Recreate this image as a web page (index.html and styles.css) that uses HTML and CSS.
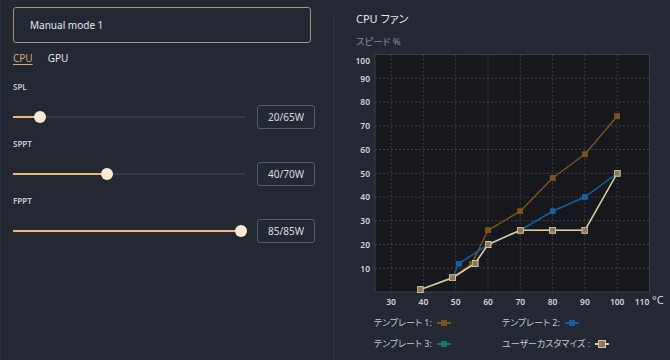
FILE: index.html
```html
<!DOCTYPE html>
<html>
  <head>
    <link rel="stylesheet" href="styles.css">
  </head>
  <body>
    <div class="left">
      <div class="mode-box">Manual mode 1</div>

      <div class="tabs">
        <span class="tab active">CPU</span>
        <span class="tab">GPU</span>
      </div>

      <div class="group">
        <div class="label">SPL</div>
        <div class="row">
          <div class="track">
            <div class="fill" style="width: 27px"></div>
            <div class="thumb" style="left: 27px"></div>
          </div>
          <div class="value">20/65W</div>
        </div>
      </div>

      <div class="group">
        <div class="label">SPPT</div>
        <div class="row">
          <div class="track">
            <div class="fill" style="width: 94px"></div>
            <div class="thumb" style="left: 94px"></div>
          </div>
          <div class="value">40/70W</div>
        </div>
      </div>

      <div class="group">
        <div class="label">FPPT</div>
        <div class="row">
          <div class="track">
            <div class="fill" style="width: 228px"></div>
            <div class="thumb" style="left: 228px"></div>
          </div>
          <div class="value">85/85W</div>
        </div>
      </div>
    </div>

    <div class="divider"></div>

    <div class="right">
      <div class="head">
        <div class="title">CPU ファン</div>
        <div class="subtitle">スピード %</div>
      </div>

      <svg class="chart" width="335" height="260" viewBox="0 0 335 260">
        <defs>
          <marker id="m-brown" viewBox="0 0 6 6" refX="3" refY="3" markerWidth="6" markerHeight="6" markerUnits="userSpaceOnUse">
            <rect width="6" height="6" fill="#7a5419" />
          </marker>
          <marker id="m-blue" viewBox="0 0 6 6" refX="3" refY="3" markerWidth="6" markerHeight="6" markerUnits="userSpaceOnUse">
            <rect width="6" height="6" fill="#14609f" />
          </marker>
          <marker id="m-teal" viewBox="0 0 6 6" refX="3" refY="3" markerWidth="6" markerHeight="6" markerUnits="userSpaceOnUse">
            <rect width="6" height="6" fill="#167a6a" />
          </marker>
          <marker id="m-custom" viewBox="0 0 7 7" refX="3.5" refY="3.5" markerWidth="7" markerHeight="7" markerUnits="userSpaceOnUse">
            <rect x="0.5" y="0.5" width="6" height="6" fill="#8a7862" stroke="#dcc297" stroke-width="1" />
          </marker>
        </defs>

        <!-- plot area -->
        <rect class="plot" x="41" y="4.5" width="274.5" height="237.5" />

        <g class="grid">
          <line x1="57.1" y1="4.5" x2="57.1" y2="242" />
          <line x1="89.4" y1="4.5" x2="89.4" y2="242" />
          <line x1="121.7" y1="4.5" x2="121.7" y2="242" />
          <line x1="154" y1="4.5" x2="154" y2="242" />
          <line x1="186.3" y1="4.5" x2="186.3" y2="242" />
          <line x1="218.6" y1="4.5" x2="218.6" y2="242" />
          <line x1="250.9" y1="4.5" x2="250.9" y2="242" />
          <line x1="283.2" y1="4.5" x2="283.2" y2="242" />

          <line x1="41" y1="28.25" x2="315.5" y2="28.25" />
          <line x1="41" y1="52" x2="315.5" y2="52" />
          <line x1="41" y1="75.75" x2="315.5" y2="75.75" />
          <line x1="41" y1="99.5" x2="315.5" y2="99.5" />
          <line x1="41" y1="123.25" x2="315.5" y2="123.25" />
          <line x1="41" y1="147" x2="315.5" y2="147" />
          <line x1="41" y1="170.75" x2="315.5" y2="170.75" />
          <line x1="41" y1="194.5" x2="315.5" y2="194.5" />
          <line x1="41" y1="218.25" x2="315.5" y2="218.25" />
        </g>

        <g class="axis-y">
          <text x="36" y="13.5">100</text>
          <text x="36" y="31.5">90</text>
          <text x="36" y="55">80</text>
          <text x="36" y="79">70</text>
          <text x="36" y="102.5">60</text>
          <text x="36" y="126.5">50</text>
          <text x="36" y="150">40</text>
          <text x="36" y="174">30</text>
          <text x="36" y="197.5">20</text>
          <text x="36" y="221.5">10</text>
        </g>

        <g class="axis-x">
          <text x="57.1" y="254.5">30</text>
          <text x="89.4" y="254.5">40</text>
          <text x="121.7" y="254.5">50</text>
          <text x="154" y="254.5">60</text>
          <text x="186.3" y="254.5">70</text>
          <text x="218.6" y="254.5">80</text>
          <text x="250.9" y="254.5">90</text>
          <text x="283.2" y="254.5">100</text>
          <text x="308" y="254.5">110</text>
        </g>
        <text class="unit" x="318" y="254">°C</text>

        <!-- series -->
        <polyline class="line" stroke="#167a6a" marker-start="url(#m-teal)" marker-mid="url(#m-teal)" marker-end="url(#m-teal)"
          points="86.2,239.6 118.5,227.75 141.1,213.5 154,194.5 186.3,180.25 218.6,180.25 250.9,180.25 283.2,123.25" />
        <polyline class="line" stroke="#7a5419" marker-start="url(#m-brown)" marker-mid="url(#m-brown)" marker-end="url(#m-brown)"
          points="86.2,239.6 118.5,227.75 137.9,213.5 154,180.25 186.3,161.25 218.6,128 250.9,104.25 283.2,66.25" />
        <polyline class="line" stroke="#14609f" marker-start="url(#m-blue)" marker-mid="url(#m-blue)" marker-end="url(#m-blue)"
          points="86.2,239.6 118.5,227.75 125,213.5 154,194.5 186.3,180.25 218.6,161.25 250.9,147 283.2,123.25" />
        <polyline class="line" stroke="#e8c994" marker-start="url(#m-custom)" marker-mid="url(#m-custom)" marker-end="url(#m-custom)"
          points="86.2,239.6 118.5,227.75 141.1,213.5 154,194.5 186.3,180.25 218.6,180.25 250.9,180.25 283.2,123.25" />
      </svg>

      <div class="legend">
        <div class="legend-item">テンプレート 1: <span class="swatch brown"></span></div>
        <div class="legend-item">テンプレート 2: <span class="swatch blue"></span></div>
        <div class="legend-item">テンプレート 3: <span class="swatch teal"></span></div>
        <div class="legend-item">ユーザーカスタマイズ : <span class="swatch custom"></span></div>
      </div>
    </div>
  </body>
</html>
```

FILE: styles.css
```css
body {
  margin: 0;
  width: 670px;
  height: 360px;
  overflow: hidden;
  display: flex;
  background-color: #232833;
  color: #e6e7ea;
  font-family: "Noto Sans", "Noto Sans CJK JP", sans-serif;
  font-feature-settings: "palt";
}

.left {
  width: 333px;
  border-left: 1px solid #2b303b;
  padding-left: 12px;
  box-sizing: border-box;
}

.divider {
  width: 1px;
  margin-top: 13px;
  background-color: #2f3440;
}

.right {
  flex: 1;
}

/* left side */

.mode-box {
  margin-top: 7px;
  width: 298px;
  height: 36px;
  box-sizing: border-box;
  border: 1px solid #a8937a;
  border-radius: 3px;
  padding-left: 16px;
  display: flex;
  align-items: center;
  font-size: 10px;
}

.tabs {
  margin-top: 7px;
  display: flex;
  gap: 15px;
  font-size: 10px;
  line-height: 16px;
}

.tab.active {
  color: #d5a874;
  text-decoration: underline;
  text-underline-offset: 2px;
}

.group {
  margin-top: 7px;
}

.tabs + .group {
  margin-top: 13px;
}

.label {
  font-size: 8px;
  font-weight: 600;
  line-height: 16px;
  color: #c9ccd2;
}

.row {
  margin-top: 10px;
  display: flex;
  align-items: center;
}

.track {
  position: relative;
  width: 232px;
  height: 2px;
  background-color: #343944;
}

.fill {
  height: 100%;
  background-color: #eeb574;
}

.thumb {
  position: absolute;
  top: -5px;
  width: 12px;
  height: 12px;
  margin-left: -6px;
  border-radius: 50%;
  background-color: #f9ead6;
}

.value {
  margin-left: 12px;
  width: 58px;
  height: 24px;
  box-sizing: border-box;
  border: 1px solid #565b66;
  border-radius: 3px;
  display: flex;
  align-items: center;
  justify-content: center;
  font-size: 10px;
  color: #dcdde0;
}

/* right side */

.head {
  padding: 11px 0 0 22px;
}

.title {
  font-size: 11px;
  line-height: 16px;
}

.subtitle {
  margin-top: 7px;
  font-size: 9.5px;
  line-height: 16px;
  color: #8b8f98;
}

.chart {
  display: block;
}

.plot {
  fill: #16181e;
  stroke: #3a3f4b;
  stroke-width: 1;
}

.grid line {
  stroke: #3c4049;
  stroke-width: 1;
  stroke-dasharray: 2 2;
}

.axis-y text,
.axis-x text {
  font-size: 8.5px;
  font-weight: 600;
  fill: #d3d5da;
}

.axis-y text {
  text-anchor: end;
}

.axis-x text {
  text-anchor: middle;
}

.unit {
  font-size: 11px;
  fill: #d3d5da;
}

.line {
  fill: none;
  stroke-width: 1.5;
}

.legend {
  margin-top: 2px;
  padding-left: 40px;
  display: grid;
  grid-template-columns: 128px 1fr;
  grid-auto-rows: 21px;
  font-size: 9px;
  color: #c7cad0;
}

.legend-item {
  display: flex;
  align-items: center;
}

.swatch {
  position: relative;
  margin-left: 5px;
  width: 14px;
  height: 2px;
  background-color: var(--c);
}

.swatch::after {
  content: "";
  position: absolute;
  left: 4px;
  top: -2px;
  width: 6px;
  height: 6px;
  background-color: var(--c);
}

.swatch.brown { --c: #7a5419; }
.swatch.blue { --c: #14609f; }
.swatch.teal { --c: #167a6a; }

.swatch.custom {
  --c: #e8c994;
}

.swatch.custom::after {
  left: 3px;
  top: -3px;
  width: 6px;
  height: 6px;
  border: 1px solid #dcc297;
  background-color: #8a7862;
}
```
